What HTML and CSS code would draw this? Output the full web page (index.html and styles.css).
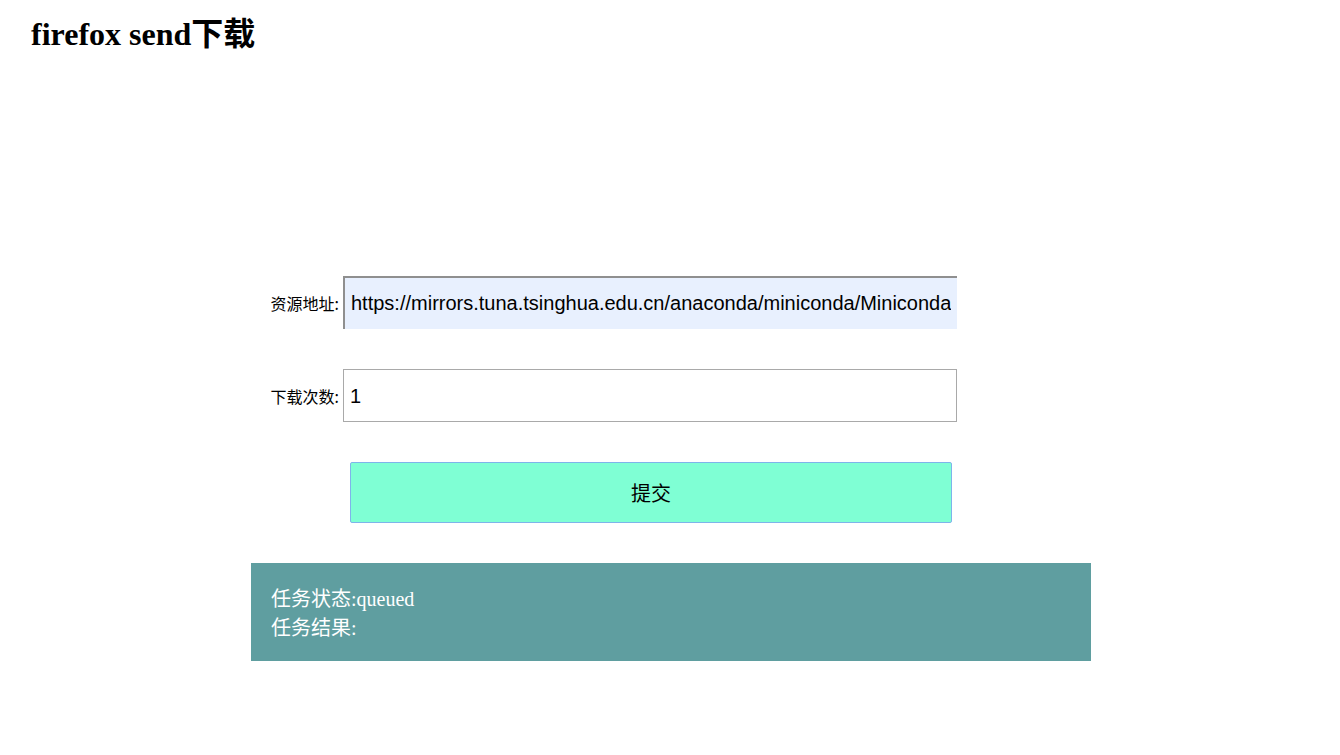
FILE: index.html
```html
<!DOCTYPE html>
<html lang="zh-CN">
<head>
<meta charset="utf-8">
<title>firefox send下载</title>
<link rel="stylesheet" href="styles.css">
</head>
<body>
<h1 class="title">firefox send下载</h1>
<main class="panel">
  <form class="form">
    <div class="row">
      <label class="label" for="url">资源地址:</label>
      <input class="field field-autofill" id="url" type="text" value="https://mirrors.tuna.tsinghua.edu.cn/anaconda/miniconda/Miniconda3-latest-Linux-x86_64.sh">
    </div>
    <div class="row">
      <label class="label" for="count">下载次数:</label>
      <input class="field" id="count" type="text" value="1">
    </div>
    <div class="row row-button">
      <button class="submit" type="button">提交</button>
    </div>
  </form>
  <section class="status">
    <div class="status-line">任务状态:queued</div>
    <div class="status-line">任务结果:</div>
  </section>
</main>
</body>
</html>
```
FILE: styles.css
```css
html, body {
  margin: 0;
  padding: 0;
  background: #ffffff;
}

body {
  font-family: "Liberation Serif", "Noto Sans CJK SC", serif;
  color: #000;
}

.title {
  margin: 0;
  padding: 15px 0 0 31px;
  font-size: 32px;
  font-weight: bold;
  line-height: 38px;
  font-family: "Liberation Serif", "Noto Sans CJK SC", serif;
}

.panel {
  width: 840px;
  margin: 223px 0 0 calc(50% - 419px);
  display: flex;
  flex-direction: column;
  gap: 40px;
}

.form {
  display: flex;
  flex-direction: column;
  gap: 40px;
  margin: 0;
}

.row {
  display: grid;
  grid-template-columns: 92px 614px;
  align-items: center;
}

.label {
  text-align: right;
  padding-right: 4px;
  font-family: "Noto Sans CJK SC", sans-serif;
  font-size: 16px;
  padding-top: 0;
}

.field {
  box-sizing: border-box;
  width: 614px;
  height: 53px;
  margin: 0;
  padding: 2px 6px 0;
  border: 1px solid #a9a9a9;
  background: #fff;
  font-family: "Liberation Sans", "Noto Sans CJK SC", sans-serif;
  font-size: 20px;
  color: #000;
  outline: none;
}

.field-autofill {
  background: #e8f0fe;
  border-width: 2px 0 0 2px;
  border-style: solid;
  border-color: #8f8f8f #e8f0fe #e8f0fe #8f8f8f;
  padding: 0 6px;
}

.row-button {
  grid-template-columns: 99px 602px;
}

.submit {
  grid-column: 2;
  box-sizing: border-box;
  width: 602px;
  height: 61px;
  margin: 0;
  background: #7fffd4;
  border: 1px solid #7eb4ea;
  border-radius: 2px;
  font-family: "Noto Sans CJK SC", sans-serif;
  font-size: 20px;
  color: #000;
}

.status {
  box-sizing: border-box;
  width: 840px;
  padding: 22px 20px 18px;
  background: #5f9ea0;
  color: #fff;
  font-family: "Liberation Serif", "Noto Sans CJK SC", serif;
  font-size: 20px;
  line-height: 29px;
}
```
